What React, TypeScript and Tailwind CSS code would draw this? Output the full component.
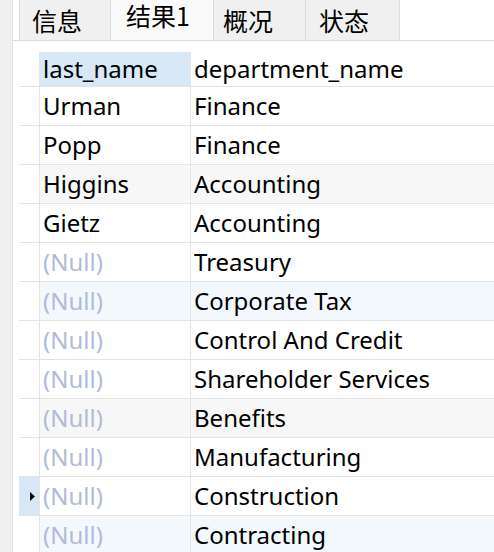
import React from 'react';

interface Row {
  last: string | null;
  dept: string;
}

const rows: Row[] = [
  { last: 'Urman', dept: 'Finance' },
  { last: 'Popp', dept: 'Finance' },
  { last: 'Higgins', dept: 'Accounting' },
  { last: 'Gietz', dept: 'Accounting' },
  { last: null, dept: 'Treasury' },
  { last: null, dept: 'Corporate Tax' },
  { last: null, dept: 'Control And Credit' },
  { last: null, dept: 'Shareholder Services' },
  { last: null, dept: 'Benefits' },
  { last: null, dept: 'Manufacturing' },
  { last: null, dept: 'Construction' },
  { last: null, dept: 'Contracting' },
];

// row tints as seen in the grid
const rowBg = (i: number) => {
  if (i === 2 || i === 8) return 'bg-[#f7f7f7]';
  if (i === 5 || i === 11) return 'bg-[#f3f8fd]';
  return 'bg-white';
};

const tabs = [
  { label: '信息', cls: 'w-[92px] border-l pl-[12px] pt-[7px] bg-[#f0f0f0]' },
  { label: '结果1', cls: 'w-[103px] pl-[15px] pt-[2px] bg-[#fafafa]' },
  { label: '概况', cls: 'w-[92px] pl-[9px] pt-[7px] bg-[#f0f0f0]' },
  { label: '状态', cls: 'w-[94px] pl-[13px] pt-[7px] bg-[#f0f0f0]' },
];

const App: React.FC = () => {
  return (
    <div
      className="flex h-[552px] w-[494px] overflow-hidden bg-white text-black"
      style={{ fontFamily: '"Noto Sans", "Noto Sans CJK SC", sans-serif' }}
    >
      {/* left gutter */}
      <div className="w-[13px] shrink-0 border-r border-[#e2e2e2] bg-[#f0f0f0]" />

      <div className="flex min-w-0 flex-1 flex-col">
        {/* tab strip */}
        <div className="flex h-[41px] shrink-0 border-b border-[#dcdcdc] pl-[6px]">
          {tabs.map((t) => (
            <div
              key={t.label}
              className={`${t.cls} h-full shrink-0 border-r border-[#dcdcdc] text-[25px] leading-[26px] whitespace-nowrap`}
              style={{ fontFamily: '"Noto Sans CJK SC", "Noto Sans", sans-serif' }}
            >
              {t.label}
            </div>
          ))}
        </div>

        {/* result grid */}
        <div className="mt-[11px] pl-[6px]">
          <div className="grid grid-cols-[21px_151px_1fr] text-[24px]">
            <div className="h-[35px] border-r border-b border-[#e4e4e4] bg-white" />
            <div className="flex h-[35px] items-center border-r border-b border-[#e4e4e4] bg-[#d9e8f7] pl-[3px]">
              last_name
            </div>
            <div className="flex h-[35px] items-center border-b border-[#e4e4e4] bg-white pl-[3px]">
              department_name
            </div>

            {rows.map((r, i) => (
              <React.Fragment key={i}>
                <div
                  className={`flex h-[39px] items-center justify-end border-r border-b border-[#e4e4e4] pr-[4px] ${
                    i === 10 ? 'bg-[#d9e8f7]' : 'bg-white'
                  }`}
                >
                  {i === 10 && (
                    <svg width="5" height="9" viewBox="0 0 5 9">
                      <path d="M0 0 L5 4.5 L0 9 Z" fill="#000" />
                    </svg>
                  )}
                </div>
                <div
                  className={`flex h-[39px] items-center border-r border-b border-[#e4e4e4] pl-[3px] ${rowBg(i)} ${
                    r.last ? 'text-black' : 'text-[#b0bbd8]'
                  }`}
                >
                  {r.last ?? '(Null)'}
                </div>
                <div className={`flex h-[39px] items-center border-b border-[#e4e4e4] pl-[3px] ${rowBg(i)}`}>
                  {r.dept}
                </div>
              </React.Fragment>
            ))}
          </div>
        </div>
      </div>
    </div>
  );
};

export default App;
